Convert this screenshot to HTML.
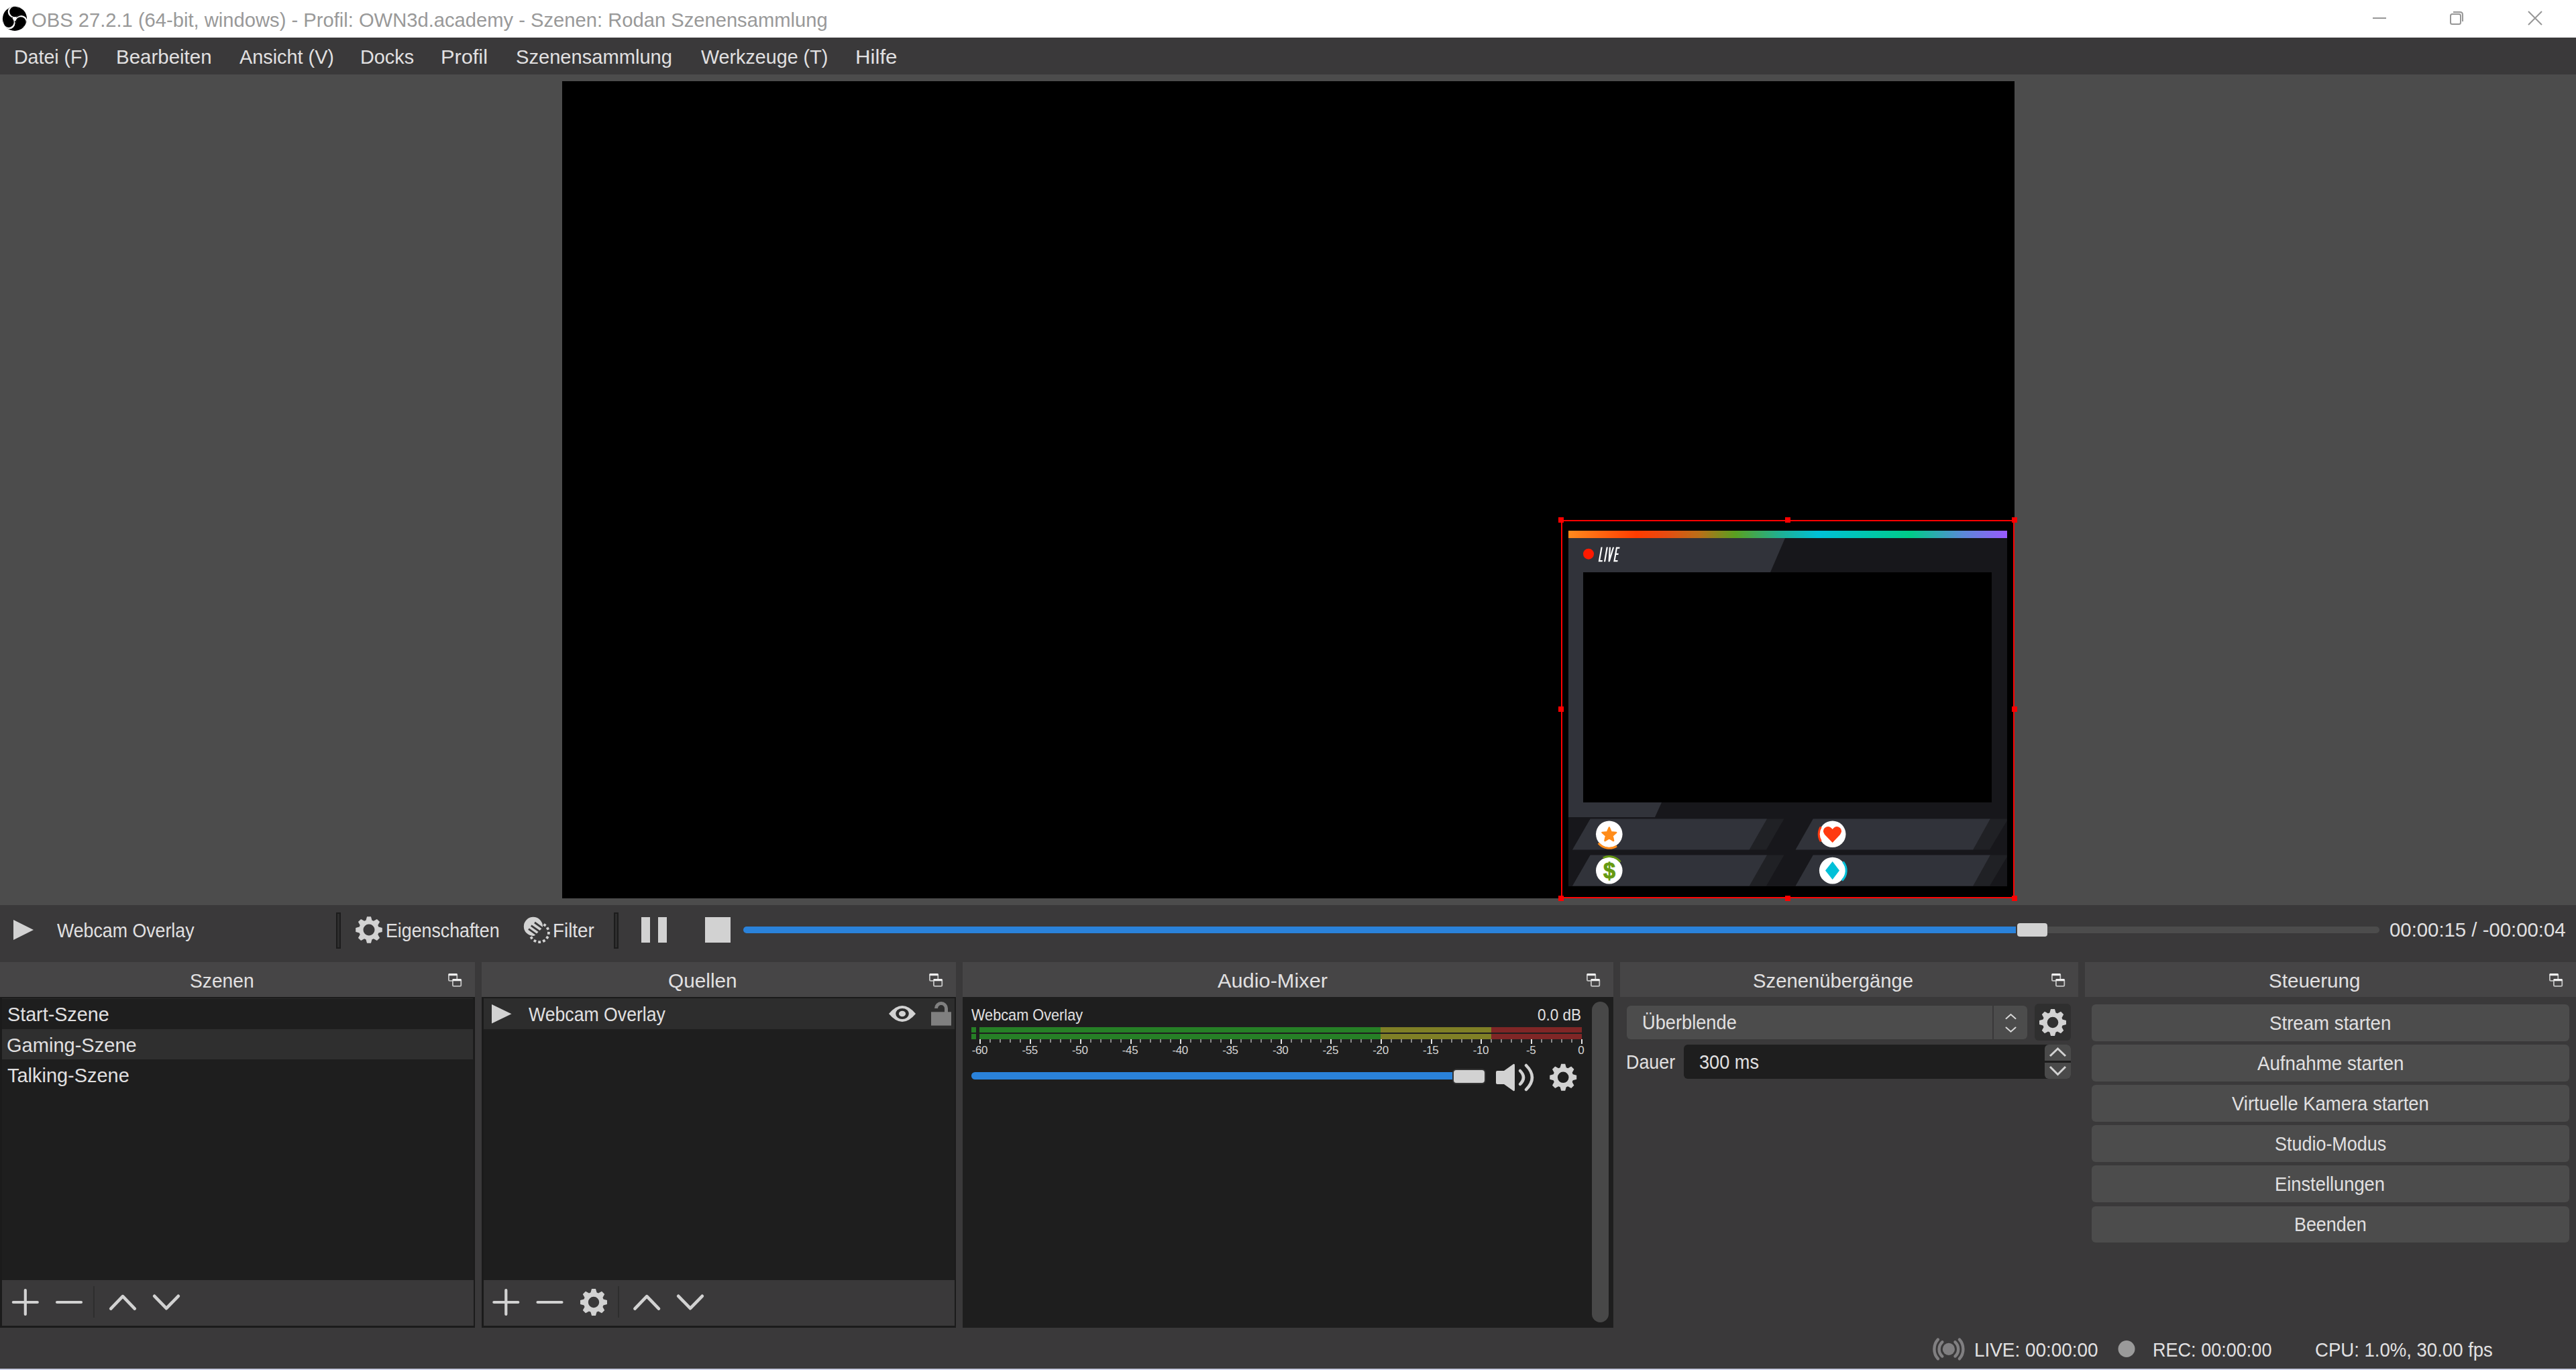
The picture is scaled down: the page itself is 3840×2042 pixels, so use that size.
<!DOCTYPE html>
<html><head><meta charset="utf-8"><style>
html,body{margin:0;padding:0;width:3840px;height:2042px;overflow:hidden;background:#3a393a;}
.r{position:absolute;}
.t{position:absolute;white-space:pre;line-height:1;transform-origin:0 0;font-family:"Liberation Sans",sans-serif;}
svg{position:absolute;left:0;top:0;}
</style></head><body>
<div class="r" style="left:0px;top:0px;width:3840px;height:56px;background:#ffffff;"></div>
<div class="r" style="left:0px;top:56px;width:3840px;height:55px;background:#3a393a;"></div>
<div class="r" style="left:0px;top:111px;width:3840px;height:1238px;background:#4c4c4c;"></div>
<div class="r" style="left:838px;top:121px;width:2165px;height:1218px;background:#000000;"></div>
<div class="r" style="left:0px;top:1349px;width:3840px;height:85px;background:#3a393a;"></div>
<div class="r" style="left:500.5px;top:1359.5px;width:7px;height:54px;background:#2e2e2e;border:2px solid #1c1c1c;box-sizing:border-box;"></div>
<div class="r" style="left:915px;top:1359.5px;width:7px;height:54px;background:#2e2e2e;border:2px solid #1c1c1c;box-sizing:border-box;"></div>
<div class="r" style="left:956px;top:1367px;width:13px;height:38px;background:#d2d2d2;"></div>
<div class="r" style="left:981px;top:1367px;width:13px;height:38px;background:#d2d2d2;"></div>
<div class="r" style="left:1051px;top:1367px;width:38px;height:38px;background:#d2d2d2;"></div>
<div class="r" style="left:3045px;top:1381px;width:502px;height:10px;background:#4c4c4c;border-radius:5px;"></div>
<div class="r" style="left:1108px;top:1381px;width:1897px;height:10px;background:#2a82da;border-radius:5px 0 0 5px;"></div>
<div class="r" style="left:3007px;top:1375.5px;width:45px;height:20px;background:#d2d2d2;border-radius:4px;"></div>
<div class="r" style="left:0px;top:1434px;width:3840px;height:606px;background:#3a393a;"></div>
<div class="r" style="left:0px;top:1434px;width:708px;height:52px;background:#464546;"></div>
<div class="r" style="left:718px;top:1434px;width:707px;height:52px;background:#464546;"></div>
<div class="r" style="left:1435px;top:1434px;width:970px;height:52px;background:#464546;"></div>
<div class="r" style="left:2415px;top:1434px;width:683px;height:52px;background:#464546;"></div>
<div class="r" style="left:3108px;top:1434px;width:732px;height:52px;background:#464546;"></div>
<div class="r" style="left:0px;top:1486px;width:708px;height:493px;background:#1b1b1b;"></div>
<div class="r" style="left:2.5px;top:1488.5px;width:703px;height:419.5px;background:#1e1e1e;"></div>
<div class="r" style="left:2.5px;top:1908px;width:703px;height:68px;background:#3a393a;"></div>
<div class="r" style="left:718px;top:1486px;width:707px;height:493px;background:#1b1b1b;"></div>
<div class="r" style="left:720.5px;top:1488.5px;width:702px;height:419.5px;background:#1e1e1e;"></div>
<div class="r" style="left:720.5px;top:1908px;width:702px;height:68px;background:#3a393a;"></div>
<div class="r" style="left:2.5px;top:1534px;width:702px;height:45px;background:#2f2f2f;"></div>
<div class="r" style="left:2.5px;top:1488px;width:702px;height:1px;background:#2a2a2a;"></div>
<div class="r" style="left:720.5px;top:1488px;width:702px;height:46px;background:#2d2d2d;"></div>
<div class="r" style="left:139px;top:1917px;width:2px;height:47px;background:#2e2e2e;"></div>
<div class="r" style="left:921px;top:1917px;width:2px;height:47px;background:#2e2e2e;"></div>
<div class="r" style="left:1435px;top:1486px;width:970px;height:493px;background:#1e1e1e;"></div>
<div class="r" style="left:2372.5px;top:1493px;width:25.3px;height:478px;background:#484848;border-radius:12.6px;"></div>
<div class="r" style="left:1448px;top:1531px;width:7px;height:8px;background:#267f26;"></div>
<div class="r" style="left:1448px;top:1541px;width:7px;height:8px;background:#267f26;"></div>
<div class="r" style="left:1460px;top:1531px;width:598px;height:8px;background:#267f26;"></div>
<div class="r" style="left:2058px;top:1531px;width:165px;height:8px;background:#7f7f26;"></div>
<div class="r" style="left:2223px;top:1531px;width:135px;height:8px;background:#7f2626;"></div>
<div class="r" style="left:1460px;top:1541px;width:598px;height:8px;background:#267f26;"></div>
<div class="r" style="left:2058px;top:1541px;width:165px;height:8px;background:#7f7f26;"></div>
<div class="r" style="left:2223px;top:1541px;width:135px;height:8px;background:#7f2626;"></div>
<div class="r" style="left:1460.4px;top:1549px;width:2px;height:7px;background:#e6e6e6;"></div>
<div class="r" style="left:1475.3px;top:1549px;width:2px;height:5px;background:#8a8a8a;"></div>
<div class="r" style="left:1490.3px;top:1549px;width:2px;height:5px;background:#8a8a8a;"></div>
<div class="r" style="left:1505.2px;top:1549px;width:2px;height:5px;background:#8a8a8a;"></div>
<div class="r" style="left:1520.2px;top:1549px;width:2px;height:5px;background:#8a8a8a;"></div>
<div class="r" style="left:1535.1px;top:1549px;width:2px;height:7px;background:#e6e6e6;"></div>
<div class="r" style="left:1550.0px;top:1549px;width:2px;height:5px;background:#8a8a8a;"></div>
<div class="r" style="left:1565.0px;top:1549px;width:2px;height:5px;background:#8a8a8a;"></div>
<div class="r" style="left:1579.9px;top:1549px;width:2px;height:5px;background:#8a8a8a;"></div>
<div class="r" style="left:1594.9px;top:1549px;width:2px;height:5px;background:#8a8a8a;"></div>
<div class="r" style="left:1609.8px;top:1549px;width:2px;height:7px;background:#e6e6e6;"></div>
<div class="r" style="left:1624.7px;top:1549px;width:2px;height:5px;background:#8a8a8a;"></div>
<div class="r" style="left:1639.7px;top:1549px;width:2px;height:5px;background:#8a8a8a;"></div>
<div class="r" style="left:1654.6px;top:1549px;width:2px;height:5px;background:#8a8a8a;"></div>
<div class="r" style="left:1669.6px;top:1549px;width:2px;height:5px;background:#8a8a8a;"></div>
<div class="r" style="left:1684.5px;top:1549px;width:2px;height:7px;background:#e6e6e6;"></div>
<div class="r" style="left:1699.4px;top:1549px;width:2px;height:5px;background:#8a8a8a;"></div>
<div class="r" style="left:1714.4px;top:1549px;width:2px;height:5px;background:#8a8a8a;"></div>
<div class="r" style="left:1729.3px;top:1549px;width:2px;height:5px;background:#8a8a8a;"></div>
<div class="r" style="left:1744.3px;top:1549px;width:2px;height:5px;background:#8a8a8a;"></div>
<div class="r" style="left:1759.2px;top:1549px;width:2px;height:7px;background:#e6e6e6;"></div>
<div class="r" style="left:1774.1px;top:1549px;width:2px;height:5px;background:#8a8a8a;"></div>
<div class="r" style="left:1789.1px;top:1549px;width:2px;height:5px;background:#8a8a8a;"></div>
<div class="r" style="left:1804.0px;top:1549px;width:2px;height:5px;background:#8a8a8a;"></div>
<div class="r" style="left:1819.0px;top:1549px;width:2px;height:5px;background:#8a8a8a;"></div>
<div class="r" style="left:1833.9px;top:1549px;width:2px;height:7px;background:#e6e6e6;"></div>
<div class="r" style="left:1848.8px;top:1549px;width:2px;height:5px;background:#8a8a8a;"></div>
<div class="r" style="left:1863.8px;top:1549px;width:2px;height:5px;background:#8a8a8a;"></div>
<div class="r" style="left:1878.7px;top:1549px;width:2px;height:5px;background:#8a8a8a;"></div>
<div class="r" style="left:1893.7px;top:1549px;width:2px;height:5px;background:#8a8a8a;"></div>
<div class="r" style="left:1908.6px;top:1549px;width:2px;height:7px;background:#e6e6e6;"></div>
<div class="r" style="left:1923.5px;top:1549px;width:2px;height:5px;background:#8a8a8a;"></div>
<div class="r" style="left:1938.5px;top:1549px;width:2px;height:5px;background:#8a8a8a;"></div>
<div class="r" style="left:1953.4px;top:1549px;width:2px;height:5px;background:#8a8a8a;"></div>
<div class="r" style="left:1968.4px;top:1549px;width:2px;height:5px;background:#8a8a8a;"></div>
<div class="r" style="left:1983.3px;top:1549px;width:2px;height:7px;background:#e6e6e6;"></div>
<div class="r" style="left:1998.2px;top:1549px;width:2px;height:5px;background:#8a8a8a;"></div>
<div class="r" style="left:2013.2px;top:1549px;width:2px;height:5px;background:#8a8a8a;"></div>
<div class="r" style="left:2028.1px;top:1549px;width:2px;height:5px;background:#8a8a8a;"></div>
<div class="r" style="left:2043.1px;top:1549px;width:2px;height:5px;background:#8a8a8a;"></div>
<div class="r" style="left:2058.0px;top:1549px;width:2px;height:7px;background:#e6e6e6;"></div>
<div class="r" style="left:2072.9px;top:1549px;width:2px;height:5px;background:#8a8a8a;"></div>
<div class="r" style="left:2087.9px;top:1549px;width:2px;height:5px;background:#8a8a8a;"></div>
<div class="r" style="left:2102.8px;top:1549px;width:2px;height:5px;background:#8a8a8a;"></div>
<div class="r" style="left:2117.8px;top:1549px;width:2px;height:5px;background:#8a8a8a;"></div>
<div class="r" style="left:2132.7px;top:1549px;width:2px;height:7px;background:#e6e6e6;"></div>
<div class="r" style="left:2147.6px;top:1549px;width:2px;height:5px;background:#8a8a8a;"></div>
<div class="r" style="left:2162.6px;top:1549px;width:2px;height:5px;background:#8a8a8a;"></div>
<div class="r" style="left:2177.5px;top:1549px;width:2px;height:5px;background:#8a8a8a;"></div>
<div class="r" style="left:2192.5px;top:1549px;width:2px;height:5px;background:#8a8a8a;"></div>
<div class="r" style="left:2207.4px;top:1549px;width:2px;height:7px;background:#e6e6e6;"></div>
<div class="r" style="left:2222.3px;top:1549px;width:2px;height:5px;background:#8a8a8a;"></div>
<div class="r" style="left:2237.3px;top:1549px;width:2px;height:5px;background:#8a8a8a;"></div>
<div class="r" style="left:2252.2px;top:1549px;width:2px;height:5px;background:#8a8a8a;"></div>
<div class="r" style="left:2267.2px;top:1549px;width:2px;height:5px;background:#8a8a8a;"></div>
<div class="r" style="left:2282.1px;top:1549px;width:2px;height:7px;background:#e6e6e6;"></div>
<div class="r" style="left:2297.0px;top:1549px;width:2px;height:5px;background:#8a8a8a;"></div>
<div class="r" style="left:2312.0px;top:1549px;width:2px;height:5px;background:#8a8a8a;"></div>
<div class="r" style="left:2326.9px;top:1549px;width:2px;height:5px;background:#8a8a8a;"></div>
<div class="r" style="left:2341.9px;top:1549px;width:2px;height:5px;background:#8a8a8a;"></div>
<div class="r" style="left:2356.8px;top:1549px;width:2px;height:7px;background:#e6e6e6;"></div>
<div class="r" style="left:1448px;top:1598px;width:720px;height:11px;background:#2a82da;border-radius:5.5px 0 0 5.5px;"></div>
<div class="r" style="left:2165px;top:1593px;width:50px;height:23px;background:#d2d2d2;border:2px solid #333;box-sizing:border-box;border-radius:6px;"></div>
<div class="r" style="left:2425px;top:1499px;width:597px;height:49.5px;background:#4c4c4c;border-radius:6px;"></div>
<div class="r" style="left:2970px;top:1499px;width:2px;height:49.5px;background:#3a393a;"></div>
<div class="r" style="left:3033px;top:1496px;width:54px;height:55px;background:#2f2f2f;border-radius:6px;"></div>
<div class="r" style="left:2510px;top:1556.5px;width:577px;height:51.5px;background:#1e1e1e;border-radius:6px;"></div>
<div class="r" style="left:3048px;top:1556.5px;width:39px;height:24.5px;background:#4a4a4a;border-radius:6px 6px 0 0;"></div>
<div class="r" style="left:3048px;top:1583.5px;width:39px;height:24.5px;background:#4a4a4a;border-radius:0 0 6px 6px;"></div>
<div class="r" style="left:3118px;top:1497.0px;width:712px;height:54.6px;background:#4c4c4c;border-radius:6px;"></div>
<div class="r" style="left:3118px;top:1557.1px;width:712px;height:54.6px;background:#4c4c4c;border-radius:6px;"></div>
<div class="r" style="left:3118px;top:1617.2px;width:712px;height:54.6px;background:#4c4c4c;border-radius:6px;"></div>
<div class="r" style="left:3118px;top:1677.3px;width:712px;height:54.6px;background:#4c4c4c;border-radius:6px;"></div>
<div class="r" style="left:3118px;top:1737.4px;width:712px;height:54.6px;background:#4c4c4c;border-radius:6px;"></div>
<div class="r" style="left:3118px;top:1797.5px;width:712px;height:54.6px;background:#4c4c4c;border-radius:6px;"></div>
<div class="r" style="left:0px;top:2040px;width:3840px;height:2px;background:#cacee2;"></div>
<svg width="3840" height="2042" viewBox="0 0 3840 2042">
<line x1="3537" y1="27" x2="3557" y2="27" stroke="#979797" stroke-width="2"/>
<rect x="3653" y="21" width="15" height="15" rx="2.5" fill="none" stroke="#979797" stroke-width="2"/>
<path d="M3657,18 L3667,18 Q3671,18 3671,22 L3671,32" fill="none" stroke="#979797" stroke-width="2"/>
<path d="M3769,17 L3789,37 M3789,17 L3769,37" stroke="#979797" stroke-width="2"/>
<circle cx="22" cy="27.9" r="18.1" fill="#000"/>
<defs><clipPath id="obsc"><circle cx="22" cy="27.9" r="18.1"/></clipPath></defs>
<g clip-path="url(#obsc)"><circle cx="20.40" cy="17.50" r="8.7" fill="#fff"/><circle cx="31.81" cy="31.71" r="8.7" fill="#fff"/><circle cx="13.79" cy="34.49" r="8.7" fill="#fff"/><circle cx="22" cy="27.9" r="3.2" fill="#fff"/><circle cx="22.00" cy="17.50" r="7.8" fill="#000"/><circle cx="31.01" cy="33.10" r="7.8" fill="#000"/><circle cx="12.99" cy="33.10" r="7.8" fill="#000"/></g>
<defs><linearGradient id="rb" x1="0" x2="1" y1="0" y2="0"><stop offset="0" stop-color="#ff8a1e"/><stop offset="0.155" stop-color="#ff3c00"/><stop offset="0.22" stop-color="#e84a10"/><stop offset="0.3" stop-color="#b87018"/><stop offset="0.38" stop-color="#5aa020"/><stop offset="0.48" stop-color="#20b090"/><stop offset="0.57" stop-color="#00c0d8"/><stop offset="0.78" stop-color="#00cc88"/><stop offset="0.9" stop-color="#5a88d8"/><stop offset="1" stop-color="#9a5aff"/></linearGradient></defs>
<rect x="2338" y="791" width="654" height="11" fill="url(#rb)"/>
<rect x="2338" y="802" width="654" height="519" fill="#17171b"/>
<path d="M2338,802 L2661,802 L2639,853 L2360,853 L2360,1196 L2477,1196 L2467,1218 L2338,1218 Z" fill="#31333a"/>
<rect x="2360" y="853" width="609" height="343" fill="#000"/>
<circle cx="2368" cy="825.7" r="8" fill="#ff1a00"/>
<g transform="translate(0,837.2) skewX(-10) translate(0,-837.2)" stroke="#ffffff" stroke-width="2.2" fill="none" stroke-linecap="butt"><path d="M2383.8,815.6 L2383.8,836.1 L2388.6,836.1"/><path d="M2392,815.6 L2392,837.2"/><path d="M2396.1,815.6 L2398.6,837.2 L2401.3,815.6"/><path d="M2410.8,816.7 L2406.3,816.7 L2406.3,836.1 L2411.3,836.1 M2406.3,825.8 L2410.6,825.8"/></g>
<path d="M2370.6,1220.5 L2659.5,1220.5 L2633,1266.5 L2344,1266.5 Z" fill="#202125"/>
<path d="M2370.6,1220.5 L2634,1220.5 L2607.7,1266.5 L2344,1266.5 Z" fill="#31333a"/>
<path d="M2702.8,1220.5 L2991.6,1220.5 L2991.6,1223.5 L2966,1266.5 L2676.6,1266.5 Z" fill="#202125"/>
<path d="M2702.8,1220.5 L2966.8,1220.5 L2941.2,1266.5 L2676.6,1266.5 Z" fill="#31333a"/>
<path d="M2370.6,1274.5 L2659.5,1274.5 L2633,1320.5 L2344,1320.5 Z" fill="#202125"/>
<path d="M2370.6,1274.5 L2634,1274.5 L2607.7,1320.5 L2344,1320.5 Z" fill="#31333a"/>
<path d="M2702.8,1274.5 L2991.6,1274.5 L2991.6,1277.5 L2966,1320.5 L2676.6,1320.5 Z" fill="#202125"/>
<path d="M2702.8,1274.5 L2966.8,1274.5 L2941.2,1320.5 L2676.6,1320.5 Z" fill="#31333a"/>
<circle cx="2398.8" cy="1243.3" r="19.8" fill="#fff"/>
<circle cx="2731.7" cy="1243.3" r="19.8" fill="#fff"/>
<circle cx="2398.8" cy="1297.6" r="19.8" fill="#fff"/>
<circle cx="2731.7" cy="1297.6" r="19.8" fill="#fff"/>
<polygon points="2398.8,1233.4 2401.7,1240.3 2409.2,1240.9 2403.6,1245.8 2405.2,1253.1 2398.8,1249.3 2392.4,1253.1 2394.0,1245.8 2388.4,1240.9 2395.9,1240.3" fill="#ff8c1a" stroke="#ff8c1a" stroke-width="2.4" stroke-linejoin="round"/>
<path d="M2731.7,1256 L2720,1244 Q2716,1238 2720,1234 Q2726,1229 2731.7,1236 Q2737,1229 2743,1234 Q2747,1238 2743,1244 Z" fill="#ff3a10"/>
<text x="2399" y="1309.4" font-family="Liberation Sans" font-weight="bold" font-size="32.5" fill="#669a12" stroke="#669a12" stroke-width="0.9" text-anchor="middle">$</text>
<path d="M2410.03,1261.11 A21,21 0 0,1 2382.81,1256.80" stroke="#ff8c1a" stroke-width="3" fill="none"/>
<path d="M2714.32,1254.16 A20.5,20.5 0 0,1 2714.32,1232.44" stroke="#ff3a10" stroke-width="3" fill="none"/>
<path d="M2389.69,1278.73 A21,21 0 0,1 2415.45,1284.67" stroke="#669a12" stroke-width="3" fill="none"/>
<path d="M2747.40,1284.42 A20.5,20.5 0 0,1 2745.94,1312.35" stroke="#00c0d8" stroke-width="3" fill="none"/>
<path d="M2731.7,1284 L2742,1297.6 L2731.7,1311 L2721,1297.6 Z" fill="#00c0d8"/>
<rect x="2328" y="776" width="674" height="562" fill="none" stroke="#ff0000" stroke-width="2"/>
<rect x="2323" y="771" width="8" height="8" fill="#ff0000"/>
<rect x="2323" y="1053" width="8" height="8" fill="#ff0000"/>
<rect x="2323" y="1335" width="8" height="8" fill="#ff0000"/>
<rect x="2661" y="771" width="8" height="8" fill="#ff0000"/>
<rect x="2661" y="1335" width="8" height="8" fill="#ff0000"/>
<rect x="2999" y="771" width="8" height="8" fill="#ff0000"/>
<rect x="2999" y="1053" width="8" height="8" fill="#ff0000"/>
<rect x="2999" y="1335" width="8" height="8" fill="#ff0000"/>
<path d="M20,1371 L50,1386 L20,1401 Z" fill="#d2d2d2"/>
<path d="M545.49,1371.69 L547.04,1366.22 L552.96,1366.22 L554.51,1371.69 L556.93,1372.69 L561.90,1369.92 L566.08,1374.10 L563.31,1379.07 L564.31,1381.49 L569.78,1383.04 L569.78,1388.96 L564.31,1390.51 L563.31,1392.93 L566.08,1397.90 L561.90,1402.08 L556.93,1399.31 L554.51,1400.31 L552.96,1405.78 L547.04,1405.78 L545.49,1400.31 L543.07,1399.31 L538.10,1402.08 L533.92,1397.90 L536.69,1392.93 L535.69,1390.51 L530.22,1388.96 L530.22,1383.04 L535.69,1381.49 L536.69,1379.07 L533.92,1374.10 L538.10,1369.92 L543.07,1372.69 Z M558.50,1386.00 A8.5,8.5 0 1,0 541.50,1386.00 A8.5,8.5 0 1,0 558.50,1386.00 Z" fill="#d2d2d2" fill-rule="evenodd"/>
<defs><clipPath id="fcut"><path d="M770,1350 L830,1350 L776,1404 Z"/></clipPath></defs>
<g transform="translate(776,1362)"><circle cx="18.9" cy="18.9" r="14.1" fill="#d2d2d2" clip-path="url(#fcut2)"/></g>
<defs><clipPath id="fcut2"><path d="M-10,-10 L63.6,-10 L-10,63.6 Z"/></clipPath></defs>
<g transform="translate(776,1362)" stroke-linecap="butt"><path d="M21,13 L34,22.4" stroke="#3a393a" stroke-width="2.8"/><path d="M15.8,17.6 L30.5,28" stroke="#3a393a" stroke-width="2.8"/><path d="M12,22.6 L26,32.6" stroke="#3a393a" stroke-width="2.8"/></g>
<rect x="810.07" y="1376.91" width="3.8" height="3.8" fill="#d2d2d2" transform="rotate(-55.0 811.97 1378.81)"/>
<rect x="814.58" y="1382.18" width="3.8" height="3.8" fill="#d2d2d2" transform="rotate(-26.1 816.48 1384.08)"/>
<rect x="815.98" y="1388.96" width="3.8" height="3.8" fill="#d2d2d2" transform="rotate(2.7 817.88 1390.86)"/>
<rect x="813.94" y="1395.58" width="3.8" height="3.8" fill="#d2d2d2" transform="rotate(31.6 815.84 1397.48)"/>
<rect x="808.96" y="1400.39" width="3.8" height="3.8" fill="#d2d2d2" transform="rotate(60.4 810.86 1402.29)"/>
<rect x="802.27" y="1402.20" width="3.8" height="3.8" fill="#d2d2d2" transform="rotate(89.3 804.17 1404.10)"/>
<rect x="795.54" y="1400.56" width="3.8" height="3.8" fill="#d2d2d2" transform="rotate(118.1 797.44 1402.46)"/>
<rect x="790.44" y="1395.87" width="3.8" height="3.8" fill="#d2d2d2" transform="rotate(147.0 792.34 1397.77)"/>
<g fill="none" stroke="#c4c4c4" stroke-width="1.8"><rect x="668.9" y="1452" width="12.4" height="9.8" rx="1.6"/><rect x="674.9" y="1460" width="12.4" height="9.8" rx="1.6" fill="#464546"/></g>
<rect x="668.5" y="1451" width="13.2" height="3.2" rx="1.2" fill="#f0f0f0"/><rect x="674.5" y="1459" width="13.2" height="3.2" rx="1.2" fill="#f0f0f0"/>
<g fill="none" stroke="#c4c4c4" stroke-width="1.8"><rect x="1385.9" y="1452" width="12.4" height="9.8" rx="1.6"/><rect x="1391.9" y="1460" width="12.4" height="9.8" rx="1.6" fill="#464546"/></g>
<rect x="1385.5" y="1451" width="13.2" height="3.2" rx="1.2" fill="#f0f0f0"/><rect x="1391.5" y="1459" width="13.2" height="3.2" rx="1.2" fill="#f0f0f0"/>
<g fill="none" stroke="#c4c4c4" stroke-width="1.8"><rect x="2365.9" y="1452" width="12.4" height="9.8" rx="1.6"/><rect x="2371.9" y="1460" width="12.4" height="9.8" rx="1.6" fill="#464546"/></g>
<rect x="2365.5" y="1451" width="13.2" height="3.2" rx="1.2" fill="#f0f0f0"/><rect x="2371.5" y="1459" width="13.2" height="3.2" rx="1.2" fill="#f0f0f0"/>
<g fill="none" stroke="#c4c4c4" stroke-width="1.8"><rect x="3058.9" y="1452" width="12.4" height="9.8" rx="1.6"/><rect x="3064.9" y="1460" width="12.4" height="9.8" rx="1.6" fill="#464546"/></g>
<rect x="3058.5" y="1451" width="13.2" height="3.2" rx="1.2" fill="#f0f0f0"/><rect x="3064.5" y="1459" width="13.2" height="3.2" rx="1.2" fill="#f0f0f0"/>
<g fill="none" stroke="#c4c4c4" stroke-width="1.8"><rect x="3800.9" y="1452" width="12.4" height="9.8" rx="1.6"/><rect x="3806.9" y="1460" width="12.4" height="9.8" rx="1.6" fill="#464546"/></g>
<rect x="3800.5" y="1451" width="13.2" height="3.2" rx="1.2" fill="#f0f0f0"/><rect x="3806.5" y="1459" width="13.2" height="3.2" rx="1.2" fill="#f0f0f0"/>
<path d="M19.799999999999997,1941 L55.8,1941 M37.8,1923 L37.8,1959" stroke="#d2d2d2" stroke-width="4.2" stroke-linecap="round"/>
<path d="M85,1941 L121,1941" stroke="#d2d2d2" stroke-width="4.2" stroke-linecap="round"/>
<path d="M165.2,1950.6 L183,1932.2 L200.8,1950.6" stroke="#d2d2d2" stroke-width="4.6" stroke-linecap="round" stroke-linejoin="round" fill="none"/>
<path d="M230.2,1931.8 L248,1950.2 L265.8,1931.8" stroke="#d2d2d2" stroke-width="4.6" stroke-linecap="round" stroke-linejoin="round" fill="none"/>
<path d="M736.3,1941 L772.3,1941 M754.3,1923 L754.3,1959" stroke="#d2d2d2" stroke-width="4.2" stroke-linecap="round"/>
<path d="M801.5,1941 L837.5,1941" stroke="#d2d2d2" stroke-width="4.2" stroke-linecap="round"/>
<path d="M946.4000000000001,1950.6 L964.2,1932.2 L982.0,1950.6" stroke="#d2d2d2" stroke-width="4.6" stroke-linecap="round" stroke-linejoin="round" fill="none"/>
<path d="M1011.2,1931.8 L1029,1950.2 L1046.8,1931.8" stroke="#d2d2d2" stroke-width="4.6" stroke-linecap="round" stroke-linejoin="round" fill="none"/>
<path d="M880.43,1926.50 L882.01,1921.02 L887.99,1921.02 L889.57,1926.50 L892.02,1927.52 L897.02,1924.76 L901.24,1928.98 L898.48,1933.98 L899.50,1936.43 L904.98,1938.01 L904.98,1943.99 L899.50,1945.57 L898.48,1948.02 L901.24,1953.02 L897.02,1957.24 L892.02,1954.48 L889.57,1955.50 L887.99,1960.98 L882.01,1960.98 L880.43,1955.50 L877.98,1954.48 L872.98,1957.24 L868.76,1953.02 L871.52,1948.02 L870.50,1945.57 L865.02,1943.99 L865.02,1938.01 L870.50,1936.43 L871.52,1933.98 L868.76,1928.98 L872.98,1924.76 L877.98,1927.52 Z M893.20,1941.00 A8.2,8.2 0 1,0 876.80,1941.00 A8.2,8.2 0 1,0 893.20,1941.00 Z" fill="#d2d2d2" fill-rule="evenodd"/>
<path d="M733,1497 L762.5,1511.2 L733,1525.5 Z" fill="#d2d2d2"/>
<path d="M1325,1511 Q1345,1487 1365,1511 Q1345,1535 1325,1511 Z" fill="#d2d2d2"/>
<ellipse cx="1345" cy="1511" rx="9.8" ry="8" fill="#2c2c2c"/><ellipse cx="1345" cy="1511" rx="5.1" ry="4.2" fill="#d2d2d2"/>
<rect x="1388" y="1508.3" width="30" height="20.3" fill="#808080"/>
<path d="M1395.5,1503 L1395.5,1503 A7.5,7.5 0 0,1 1410.5,1503 L1410.5,1509" stroke="#808080" stroke-width="5" fill="none"/>
<path d="M2232,1596 L2242,1596 L2256,1586 Q2258,1585 2258,1588 L2258,1624 Q2258,1627 2256,1626 L2242,1616 L2232,1616 Q2230,1616 2230,1614 L2230,1598 Q2230,1596 2232,1596 Z" fill="#d2d2d2"/>
<path d="M2266,1596 Q2276,1606 2266,1616" stroke="#d2d2d2" stroke-width="4.5" stroke-linecap="round" fill="none"/>
<path d="M2275,1588 Q2293,1606 2275,1624" stroke="#d2d2d2" stroke-width="4.5" stroke-linecap="round" fill="none"/>
<path d="M2325.63,1591.30 L2327.21,1585.82 L2333.19,1585.82 L2334.77,1591.30 L2337.22,1592.32 L2342.22,1589.56 L2346.44,1593.78 L2343.68,1598.78 L2344.70,1601.23 L2350.18,1602.81 L2350.18,1608.79 L2344.70,1610.37 L2343.68,1612.82 L2346.44,1617.82 L2342.22,1622.04 L2337.22,1619.28 L2334.77,1620.30 L2333.19,1625.78 L2327.21,1625.78 L2325.63,1620.30 L2323.18,1619.28 L2318.18,1622.04 L2313.96,1617.82 L2316.72,1612.82 L2315.70,1610.37 L2310.22,1608.79 L2310.22,1602.81 L2315.70,1601.23 L2316.72,1598.78 L2313.96,1593.78 L2318.18,1589.56 L2323.18,1592.32 Z M2338.50,1605.80 A8.3,8.3 0 1,0 2321.90,1605.80 A8.3,8.3 0 1,0 2338.50,1605.80 Z" fill="#d2d2d2" fill-rule="evenodd"/>
<path d="M2990.5,1518.2 L2997.5,1512 L3004.5,1518.2 M2990.5,1531.5 L2997.5,1537.7 L3004.5,1531.5" stroke="#d8d8d8" stroke-width="2" fill="none" stroke-linecap="round"/>
<path d="M3055.43,1509.50 L3057.01,1504.02 L3062.99,1504.02 L3064.57,1509.50 L3067.02,1510.52 L3072.02,1507.76 L3076.24,1511.98 L3073.48,1516.98 L3074.50,1519.43 L3079.98,1521.01 L3079.98,1526.99 L3074.50,1528.57 L3073.48,1531.02 L3076.24,1536.02 L3072.02,1540.24 L3067.02,1537.48 L3064.57,1538.50 L3062.99,1543.98 L3057.01,1543.98 L3055.43,1538.50 L3052.98,1537.48 L3047.98,1540.24 L3043.76,1536.02 L3046.52,1531.02 L3045.50,1528.57 L3040.02,1526.99 L3040.02,1521.01 L3045.50,1519.43 L3046.52,1516.98 L3043.76,1511.98 L3047.98,1507.76 L3052.98,1510.52 Z M3068.30,1524.00 A8.3,8.3 0 1,0 3051.70,1524.00 A8.3,8.3 0 1,0 3068.30,1524.00 Z" fill="#d2d2d2" fill-rule="evenodd"/>
<path d="M3056,1574 L3067.5,1563 L3079,1574 M3056,1590 L3067.5,1601.5 L3079,1590" stroke="#d2d2d2" stroke-width="3" fill="none"/>
<circle cx="2904.9" cy="2010.9" r="9.1" fill="#807f81"/>
<g stroke="#807f81" stroke-width="4.4" fill="none" stroke-linecap="round"><path d="M2895.33,2000.27 A14.3,14.3 0 0,0 2895.33,2021.53"/><path d="M2914.47,2000.27 A14.3,14.3 0 0,1 2914.47,2021.53"/><path d="M2888.92,1996.51 A21.5,21.5 0 0,0 2888.92,2025.29"/><path d="M2920.88,1996.51 A21.5,21.5 0 0,1 2920.88,2025.29"/></g>
<circle cx="3170" cy="2010.5" r="12.5" fill="#9a9a9a"/>
</svg>
<div class="t" style="left:46.93px;top:15.59px;font-size:29.07px;color:#999999;transform:scaleX(1.0036)">OBS 27.2.1 (64-bit, windows) - Profil: OWN3d.academy - Szenen: Rodan Szenensammlung</div>
<div class="t" style="left:20.87px;top:70.79px;font-size:29.07px;color:#e1e0e1;transform:scaleX(0.9819)">Datei (F)</div>
<div class="t" style="left:173.00px;top:70.79px;font-size:29.07px;color:#e1e0e1;transform:scaleX(1.0139)">Bearbeiten</div>
<div class="t" style="left:356.50px;top:70.79px;font-size:29.07px;color:#e1e0e1;transform:scaleX(0.9918)">Ansicht (V)</div>
<div class="t" style="left:537.15px;top:70.79px;font-size:29.07px;color:#e1e0e1;transform:scaleX(0.9912)">Docks</div>
<div class="t" style="left:657.20px;top:70.79px;font-size:29.07px;color:#e1e0e1;transform:scaleX(1.0573)">Profil</div>
<div class="t" style="left:769.09px;top:70.79px;font-size:29.07px;color:#e1e0e1;transform:scaleX(1.0015)">Szenensammlung</div>
<div class="t" style="left:1044.70px;top:70.79px;font-size:29.07px;color:#e1e0e1;transform:scaleX(0.9874)">Werkzeuge (T)</div>
<div class="t" style="left:1274.76px;top:70.79px;font-size:29.07px;color:#e1e0e1;transform:scaleX(1.0749)">Hilfe</div>
<div class="t" style="left:85.00px;top:1372.69px;font-size:29.07px;color:#e1e0e1;transform:scaleX(0.9200)">Webcam Overlay</div>
<div class="t" style="left:574.51px;top:1372.69px;font-size:29.07px;color:#e1e0e1;transform:scaleX(0.9205)">Eigenschaften</div>
<div class="t" style="left:823.83px;top:1372.69px;font-size:29.07px;color:#e1e0e1;transform:scaleX(0.9568)">Filter</div>
<div class="t" style="left:3562.08px;top:1372.39px;font-size:29.07px;color:#e1e0e1;transform:scaleX(1.0093)">00:00:15 / -00:00:04</div>
<div class="t" style="left:282.52px;top:1448.29px;font-size:29.07px;color:#e1e0e1;transform:scaleX(0.9703)">Szenen</div>
<div class="t" style="left:996.20px;top:1448.29px;font-size:29.07px;color:#e1e0e1;transform:scaleX(1.0247)">Quellen</div>
<div class="t" style="left:1814.60px;top:1447.79px;font-size:29.07px;color:#e1e0e1;transform:scaleX(1.0578)">Audio-Mixer</div>
<div class="t" style="left:2613.09px;top:1448.29px;font-size:29.07px;color:#e1e0e1;transform:scaleX(1.0063)">Szenenübergänge</div>
<div class="t" style="left:3381.68px;top:1448.29px;font-size:29.07px;color:#e1e0e1;transform:scaleX(1.0174)">Steuerung</div>
<div class="t" style="left:10.50px;top:1498.49px;font-size:29.07px;color:#e1e0e1;transform:scaleX(0.9880)">Start-Szene</div>
<div class="t" style="left:10.04px;top:1543.79px;font-size:29.07px;color:#e1e0e1;transform:scaleX(0.9992)">Gaming-Szene</div>
<div class="t" style="left:10.75px;top:1588.69px;font-size:29.07px;color:#e1e0e1;transform:scaleX(0.9958)">Talking-Szene</div>
<div class="t" style="left:788.00px;top:1498.09px;font-size:29.07px;color:#e1e0e1;transform:scaleX(0.9173)">Webcam Overlay</div>
<div class="t" style="left:1448.40px;top:1501.18px;font-size:24.71px;color:#e1e0e1;transform:scaleX(0.8787)">Webcam Overlay</div>
<div class="t" style="left:2292.10px;top:1501.18px;font-size:24.71px;color:#e1e0e1;transform:scaleX(0.9106)">0.0 dB</div>
<div class="t" style="left:2448.30px;top:1509.89px;font-size:29.07px;color:#e1e0e1;transform:scaleX(0.9368)">Überblende</div>
<div class="t" style="left:2423.90px;top:1568.89px;font-size:29.07px;color:#e1e0e1;transform:scaleX(0.9249)">Dauer</div>
<div class="t" style="left:2532.85px;top:1568.89px;font-size:29.07px;color:#e1e0e1;transform:scaleX(0.9336)">300 ms</div>
<div class="t" style="left:3383.14px;top:1511.49px;font-size:29.07px;color:#e1e0e1;transform:scaleX(0.9516)">Stream starten</div>
<div class="t" style="left:3365.00px;top:1571.19px;font-size:29.07px;color:#e1e0e1;transform:scaleX(0.9525)">Aufnahme starten</div>
<div class="t" style="left:3327.00px;top:1631.09px;font-size:29.07px;color:#e1e0e1;transform:scaleX(0.9442)">Virtuelle Kamera starten</div>
<div class="t" style="left:3390.76px;top:1691.19px;font-size:29.07px;color:#e1e0e1;transform:scaleX(0.9271)">Studio-Modus</div>
<div class="t" style="left:3391.47px;top:1751.29px;font-size:29.07px;color:#e1e0e1;transform:scaleX(0.9394)">Einstellungen</div>
<div class="t" style="left:3419.60px;top:1811.39px;font-size:29.07px;color:#e1e0e1;transform:scaleX(0.9245)">Beenden</div>
<div class="t" style="left:2943.42px;top:1997.89px;font-size:29.07px;color:#e1e0e1;transform:scaleX(0.9597)">LIVE: 00:00:00</div>
<div class="t" style="left:3208.59px;top:1997.89px;font-size:29.07px;color:#e1e0e1;transform:scaleX(0.9308)">REC: 00:00:00</div>
<div class="t" style="left:3451.31px;top:1997.89px;font-size:29.07px;color:#e1e0e1;transform:scaleX(0.9478)">CPU: 1.0%, 30.00 fps</div>
<div class="t" style="left:1420.4px;top:1556.6px;width:80px;text-align:center;font-size:17px;color:#d6d6d6;letter-spacing:-0.4px">-60</div>
<div class="t" style="left:1495.1px;top:1556.6px;width:80px;text-align:center;font-size:17px;color:#d6d6d6;letter-spacing:-0.4px">-55</div>
<div class="t" style="left:1569.8px;top:1556.6px;width:80px;text-align:center;font-size:17px;color:#d6d6d6;letter-spacing:-0.4px">-50</div>
<div class="t" style="left:1644.5px;top:1556.6px;width:80px;text-align:center;font-size:17px;color:#d6d6d6;letter-spacing:-0.4px">-45</div>
<div class="t" style="left:1719.2px;top:1556.6px;width:80px;text-align:center;font-size:17px;color:#d6d6d6;letter-spacing:-0.4px">-40</div>
<div class="t" style="left:1793.9px;top:1556.6px;width:80px;text-align:center;font-size:17px;color:#d6d6d6;letter-spacing:-0.4px">-35</div>
<div class="t" style="left:1868.6px;top:1556.6px;width:80px;text-align:center;font-size:17px;color:#d6d6d6;letter-spacing:-0.4px">-30</div>
<div class="t" style="left:1943.3px;top:1556.6px;width:80px;text-align:center;font-size:17px;color:#d6d6d6;letter-spacing:-0.4px">-25</div>
<div class="t" style="left:2018.0px;top:1556.6px;width:80px;text-align:center;font-size:17px;color:#d6d6d6;letter-spacing:-0.4px">-20</div>
<div class="t" style="left:2092.7px;top:1556.6px;width:80px;text-align:center;font-size:17px;color:#d6d6d6;letter-spacing:-0.4px">-15</div>
<div class="t" style="left:2167.4px;top:1556.6px;width:80px;text-align:center;font-size:17px;color:#d6d6d6;letter-spacing:-0.4px">-10</div>
<div class="t" style="left:2242.1px;top:1556.6px;width:80px;text-align:center;font-size:17px;color:#d6d6d6;letter-spacing:-0.4px">-5</div>
<div class="t" style="left:2316.8px;top:1556.6px;width:80px;text-align:center;font-size:17px;color:#d6d6d6;letter-spacing:-0.4px">0</div>
</body></html>
